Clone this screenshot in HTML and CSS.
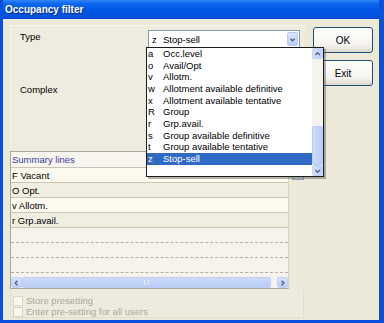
FILE: index.html
```html
<!DOCTYPE html>
<html lang="en">
<head>
  <meta charset="UTF-8" />
  <title>Occupancy filter</title>
  <link rel="stylesheet" href="styles.css">
</head>
<body>
  <div class="window">
    <div class="titlebar">Occupancy filter</div>
    <div class="client">
      <div class="main">
        <div class="panel">
          <div class="field">
            <span class="label">Type</span>
            <div class="combo">
              <span class="combo-key">z</span>
              <span class="combo-text">Stop-sell</span>
              <span class="combo-btn">
                <svg width="11" height="13" viewBox="0 0 11 13"><path d="M3 5.5 L5.5 8 L8 5.5" fill="none" stroke="#4d6185" stroke-width="1.6"/></svg>
              </span>
              <div class="droplist">
                <ul class="items">
                  <li><span class="key">a</span>Occ.level</li>
                  <li><span class="key">o</span>Avail/Opt</li>
                  <li><span class="key">v</span>Allotm.</li>
                  <li><span class="key">w</span>Allotment available definitive</li>
                  <li><span class="key">x</span>Allotment available tentative</li>
                  <li><span class="key">R</span>Group</li>
                  <li><span class="key">r</span>Grp.avail.</li>
                  <li><span class="key">s</span>Group available definitive</li>
                  <li><span class="key">t</span>Group available tentative</li>
                  <li class="selected"><span class="key">z</span>Stop-sell</li>
                </ul>
                <div class="vscroll">
                  <div class="sb-btn">
                    <svg width="10" height="10" viewBox="0 0 10 10"><path d="M2.5 6 L5 3.5 L7.5 6" fill="none" stroke="#4d6185" stroke-width="1.5"/></svg>
                  </div>
                  <div class="sb-track"></div>
                  <div class="sb-thumb"></div>
                  <div class="sb-btn">
                    <svg width="10" height="10" viewBox="0 0 10 10"><path d="M2.5 4 L5 6.5 L7.5 4" fill="none" stroke="#4d6185" stroke-width="1.5"/></svg>
                  </div>
                </div>
              </div>
            </div>
          </div>
          <div class="field complex">
            <span class="label">Complex</span>
          </div>
        </div>

        <div class="summary-wrap">
          <div class="summary">
            <div class="sum-head">Summary lines</div>
            <div class="sum-row light">F Vacant</div>
            <div class="sum-row dark">O Opt.</div>
            <div class="sum-row light">v Allotm.</div>
            <div class="sum-row dark">r Grp.avail.</div>
            <div class="sum-row empty"></div>
            <div class="sum-row empty"></div>
            <div class="sum-row empty"></div>
            <div class="sum-fill"></div>
            <div class="hscroll">
              <div class="hs-btn">
                <svg width="10" height="10" viewBox="0 0 10 10"><path d="M6 2.5 L3.5 5 L6 7.5" fill="none" stroke="#4d6185" stroke-width="1.5"/></svg>
              </div>
              <div class="hs-thumb"><span class="grip"></span></div>
              <div class="hs-btn">
                <svg width="10" height="10" viewBox="0 0 10 10"><path d="M4 2.5 L6.5 5 L4 7.5" fill="none" stroke="#4d6185" stroke-width="1.5"/></svg>
              </div>
            </div>
          </div>
          <div class="side-knob"></div>
        </div>

        <div class="presets">
          <label class="check"><span class="box"></span>Store presetting</label>
          <label class="check"><span class="box"></span>Enter pre-setting for all users</label>
        </div>
      </div>

      <div class="buttons">
        <button class="btn">OK</button>
        <button class="btn">Exit</button>
      </div>
    </div>
  </div>
</body>
</html>
```

FILE: styles.css
```css
* {
  box-sizing: border-box;
}

body {
  margin: 0;
  font-family: 'Liberation Sans', Arial, sans-serif;
  font-size: 9.5px;
  color: #000;
  background: #ece9d8;
}

.window {
  position: relative;
  width: 384px;
  height: 323px;
  border-left: 3px solid #0b4fdc;
  border-right: 5px solid #0b4fdc;
  border-bottom: 3px solid #0b4fdc;
  background: #ece9d8;
  overflow: hidden;
}

.titlebar {
  height: 19px;
  margin: 0 -5px 0 -3px;
  padding-left: 5px;
  line-height: 20px;
  font-size: 10px;
  font-weight: bold;
  color: #fff;
  text-shadow: 1px 1px 0 #0a2a8c;
  background: linear-gradient(#2f86f6 0%, #0d66ef 20%, #0058e6 50%, #0051de 85%, #0a4ad0 100%);
}

.client {
  display: flex;
  height: 301px;
  padding: 6px 0 0 7px;
}

.main {
  width: 295px;
  display: flex;
  flex-direction: column;
}

/* top panel */
.panel {
  height: 125px;
  padding: 4px 0 0 9px;
  background: #efecdf;
  border-left: 1px solid #f8f6ee;
  border-top: 1px solid #f8f6ee;
}

.field {
  display: flex;
  align-items: flex-start;
}

.label {
  width: 128px;
  line-height: 13px;
  padding-top: 0;
}

.field.complex {
  margin-top: 35px;
}

.combo {
  position: relative;
  display: flex;
  align-items: center;
  width: 152px;
  height: 18px;
  background: #fff;
  border: 1px solid #7f9db9;
}

.combo-key {
  width: 14px;
  padding-left: 3px;
}

.combo-text {
  flex: 1;
}

.combo-btn {
  width: 11px;
  height: 14px;
  margin-right: 1px;
  background: linear-gradient(#dbe6fd, #b9cdf7);
  border: 1px solid #b8caf2;
  border-radius: 2px;
  display: flex;
  align-items: center;
  justify-content: center;
}

/* open dropdown list */
.droplist {
  position: absolute;
  left: -3px;
  top: 16px;
  width: 178px;
  height: 130px;
  z-index: 10;
  display: flex;
  background: #fff;
  border: 1px solid #1c1c1c;
  box-shadow: 2px 2px 0 rgba(90, 88, 80, 0.45);
}

.items {
  flex: 1;
  margin: 0;
  padding: 0;
  list-style: none;
}

.items li {
  display: flex;
  height: 11.67px;
  line-height: 11.67px;
  padding-left: 1px;
  white-space: nowrap;
}

.items .key {
  width: 15px;
}

.items li.selected {
  background: #316ac5;
  color: #fff;
}

.vscroll {
  position: relative;
  width: 11px;
  display: flex;
  flex-direction: column;
  background: #f4f3ee;
}

.sb-btn {
  height: 11px;
  display: flex;
  align-items: center;
  justify-content: center;
  background: linear-gradient(90deg, #d6e2fc, #bccff8);
  border: 1px solid #c3d3f8;
  border-radius: 2px;
}

.sb-track {
  height: 67px;
}

.sb-thumb {
  flex: 1;
  background: linear-gradient(90deg, #cddbfb, #b8ccf6);
  border: 1px solid #bdcdf4;
  border-radius: 2px;
}

/* summary lines grid */
.summary-wrap {
  display: flex;
  margin-top: 1px;
}

.summary {
  width: 279px;
  height: 138px;
  display: flex;
  flex-direction: column;
  background: #f6f4ec;
  border: 1px solid #aca899;
  border-right-color: #d4d0c4;
}

.sum-head {
  height: 16px;
  line-height: 16px;
  padding-left: 1px;
  color: #3b3ba0;
  background: #f7f5ed;
  border-bottom: 1px solid #c8c5b6;
}

.sum-row {
  height: 15px;
  line-height: 15px;
  padding-left: 1px;
  border-bottom: 1px solid #c8c5b6;
}

.sum-row.light {
  background: #fcfaee;
}

.sum-row.dark {
  background: #f0ede1;
}

.sum-row.empty {
  background: #f5f3eb;
  border-bottom: 1px dashed #b4b1a4;
}

.sum-fill {
  flex: 1;
  background: #f5f3eb;
}

.hscroll {
  height: 11px;
  display: flex;
  background: #f4f3ee;
}

.hs-btn {
  width: 11px;
  display: flex;
  align-items: center;
  justify-content: center;
  background: linear-gradient(#d6e2fc, #bccff8);
  border: 1px solid #c3d3f8;
  border-radius: 2px;
}

.hs-thumb {
  flex: 1;
  margin-right: 6px;
  display: flex;
  align-items: center;
  justify-content: center;
  background: linear-gradient(#cddbfb, #b8ccf6);
  border: 1px solid #bdcdf4;
  border-radius: 2px;
}

.grip {
  width: 5px;
  height: 5px;
  border-left: 1px solid #e8eefc;
  border-right: 1px solid #e8eefc;
}

.side-knob {
  width: 12px;
  height: 5px;
  margin: 24px 0 0 3px;
  background: #d9dde6;
  border: 1px solid #8f9cb8;
}

/* presetting checkboxes */
.presets {
  width: 294px;
  height: 29px;
  padding: 6px 0 0 2px;
  background: #eeebde;
  border: 1px solid #e2dfd0;
  border-top: none;
}

.check {
  display: flex;
  align-items: center;
  height: 11px;
  color: #aca899;
}

.check .box {
  width: 10px;
  height: 10px;
  margin-right: 3px;
  background: #f7f6f0;
  border: 1px solid #d8d5c8;
}

/* right buttons */
.buttons {
  display: flex;
  flex-direction: column;
  margin-left: 8px;
  padding-top: 2px;
}

.btn {
  width: 60px;
  height: 26px;
  margin-bottom: 7px;
  font-family: 'Liberation Sans', Arial, sans-serif;
  font-size: 10px;
  color: #000;
  background: linear-gradient(#ffffff, #f4f3ee 70%, #dcd8cc);
  border: 1px solid #1f4d7a;
  border-radius: 3px;
}
```
